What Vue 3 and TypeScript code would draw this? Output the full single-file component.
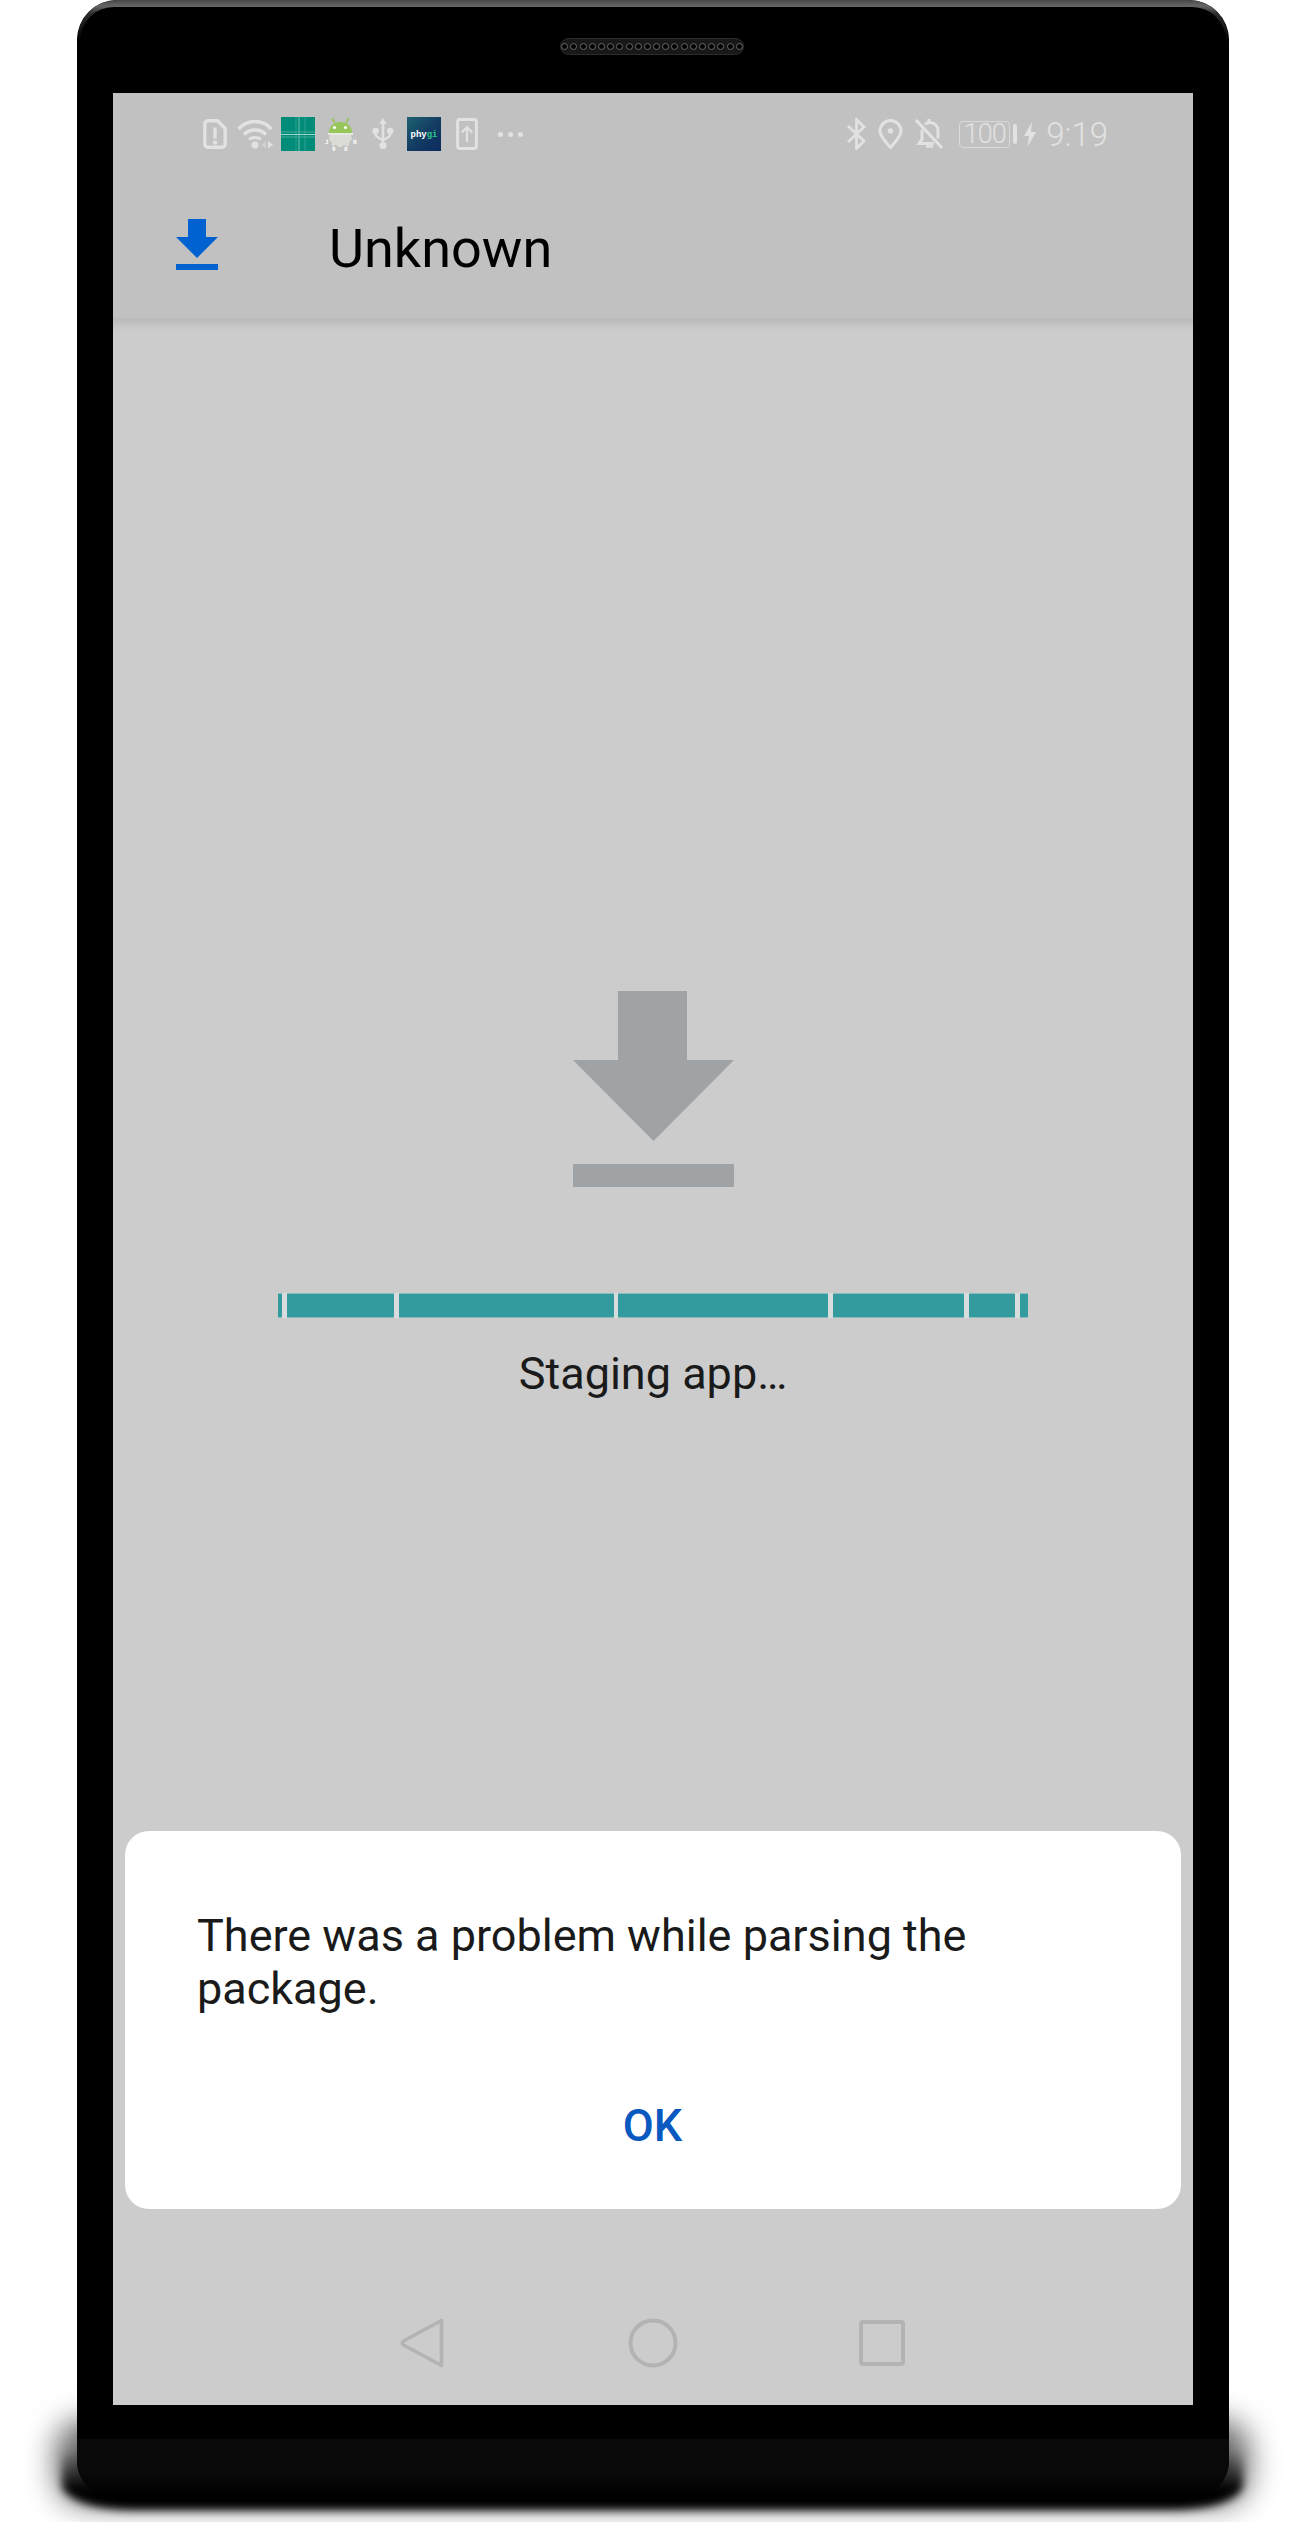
<script setup lang="ts">
const segments: number[] = [4, 107, 215, 210, 131, 46, 8]
const holes: number[] = Array.from({ length: 20 }, (_, i) => i)
</script>

<template>
  <div class="page">
    <div class="shadow-soft"></div>
    <div class="shadow-edge"></div>
    <div class="phone">
      <div class="bevel"></div>
      <div class="speaker">
        <span v-for="h in holes" :key="h" class="hole"></span>
      </div>
      <div class="screen">
        <header class="appbar">
          <div class="status">
            <div class="icons">
              <svg class="i-sim" width="24" height="30" viewBox="0 0 24 30">
                <path d="M5 1.8h9.5L22.2 9.5V25a3.2 3.2 0 0 1-3.2 3.2H5A3.2 3.2 0 0 1 1.8 25V5A3.2 3.2 0 0 1 5 1.8z" fill="none" stroke="#e2e2e2" stroke-width="3.4"/>
                <path d="M12 8.5v11" stroke="#e2e2e2" stroke-width="3.4"/>
                <circle cx="12" cy="23.5" r="2.2" fill="#e2e2e2"/>
              </svg>
              <svg class="i-wifi" width="36" height="30" viewBox="0 0 36 30">
                <path d="M1.500 10C10.500 0 25.500 0 34.500 10" fill="none" stroke="#e2e2e2" stroke-width="3.4"/>
                <path d="M7 15.500C13 9.500 23 9.500 29 15.500" fill="none" stroke="#e2e2e2" stroke-width="3.4"/>
                <path d="M12 20.500C15 17.800 21 17.800 24 20.500" fill="none" stroke="#e2e2e2" stroke-width="3"/>
                <circle cx="18" cy="26" r="3.500" fill="#e2e2e2"/>
                <path d="M29 22v7.500l-4.500-3.800z" fill="#d2d2d2"/>
                <path d="M31 22v7.500l5-3.800z" fill="#e2e2e2"/>
              </svg>
              <svg class="i-teal" width="34" height="34" viewBox="0 0 34 34">
                <rect width="34" height="34" fill="#008c78"/>
                <path d="M15 0v34M24 0v34" stroke="#2fa08e" stroke-width="1"/>
                <path d="M18 0v34" stroke="#6fbfb1" stroke-width="1"/>
                <path d="M0 15h34M0 20h34" stroke="#45ab9a" stroke-width="1"/>
                <path d="M0 17.500h34" stroke="#9ed5ca" stroke-width="1"/>
              </svg>
              <svg class="i-droid" width="32" height="33" viewBox="0 0 32 33">
                <path d="M7 0l3 5M24 0l-3 5" stroke="#97c65a" stroke-width="1.6"/>
                <path d="M4 15C4 8 9 4 15.500 4S27 8 27 15z" fill="#97c65a"/>
                <circle cx="9.500" cy="9.500" r="1.600" fill="#fff"/>
                <circle cx="20.500" cy="9.500" r="1.600" fill="#fff"/>
                <path d="M3 15h25v2H3z" fill="#e8e8e2"/>
                <path d="M5 17h21l1 4-3 4v3h-3v-1h-3l-1 2h-4l-1-2h-3v1H7v-3l-3-4z" fill="#dcdcd6"/>
                <text x="0" y="26" class="tiny">J</text>
                <text x="28" y="26" class="tiny">N</text>
                <text x="7" y="33" class="tiny">9</text>
                <text x="19" y="33" class="tiny">0</text>
              </svg>
              <svg class="i-usb" width="22" height="32" viewBox="0 0 22 32">
                <path d="M11 0l3.800 6H7.200z" fill="#e2e2e2"/>
                <path d="M11 5v22" stroke="#e2e2e2" stroke-width="2.600"/>
                <circle cx="11" cy="27.500" r="3.600" fill="#e2e2e2"/>
                <circle cx="3.600" cy="13" r="3.200" fill="#e2e2e2"/>
                <circle cx="18.200" cy="13" r="3.200" fill="#e2e2e2"/>
                <path d="M3.600 13v3.500c0 2.500 3 3 7.400 5.500M18.200 13v3.500c0 2.500-3 3-7.200 5.500" fill="none" stroke="#e2e2e2" stroke-width="2.400"/>
              </svg>
              <svg class="i-phygi" width="34" height="34" viewBox="0 0 34 34">
                <defs>
                  <linearGradient id="phy" x1="0" y1="0" x2="1" y2="1">
                    <stop offset="0" stop-color="#1f6270"/>
                    <stop offset="0.55" stop-color="#123a62"/>
                    <stop offset="1" stop-color="#0d2a60"/>
                  </linearGradient>
                </defs>
                <rect width="34" height="34" fill="url(#phy)"/>
                <text x="3.500" y="20" class="phy">phy<tspan fill="#2cc48b">gi</tspan></text>
              </svg>
              <svg class="i-up" width="22" height="32" viewBox="0 0 22 32">
                <rect x="1.600" y="1.600" width="18.800" height="28.800" rx="2.400" fill="none" stroke="#e2e2e2" stroke-width="3"/>
                <path d="M11 24V9.500M5.800 14.500L11 9l5.200 5.500" fill="none" stroke="#e2e2e2" stroke-width="2.200"/>
              </svg>
              <div class="dots"><span></span><span></span><span></span></div>
            </div>
            <div class="icons">
              <svg class="i-bt" width="19" height="32" viewBox="0 0 19 32">
                <path d="M1 8l16 15-7.500 7.500v-29L17 9 1 24" fill="none" stroke="#e2e2e2" stroke-width="2.800"/>
              </svg>
              <svg class="i-pin" width="25" height="31" viewBox="0 0 25 31">
                <path d="M12.500 28.500C8 23 2 17.500 2 12a10.500 10.500 0 0 1 21 0c0 5.500-6 11-10.500 16.500z" fill="none" stroke="#e2e2e2" stroke-width="3"/>
                <circle cx="12.500" cy="12" r="2.800" fill="#e2e2e2"/>
              </svg>
              <svg class="i-bell" width="28" height="31" viewBox="0 0 28 31">
                <path d="M7 10.500V20l-3 4.500h15M10 5.500C11.500 4 13 3.500 15 3.500c4.500 0 8 3.500 8 8v8" fill="none" stroke="#e2e2e2" stroke-width="3"/>
                <path d="M11 27.500h7" stroke="#e2e2e2" stroke-width="2.400"/>
                <path d="M1 1l26 28" stroke="#e2e2e2" stroke-width="3"/>
                <path d="M14 0v3" stroke="#e2e2e2" stroke-width="3"/>
              </svg>
              <div class="battery"><span>100</span></div>
              <span class="nub"></span>
              <svg class="i-bolt" width="12" height="25" viewBox="0 0 12 25">
                <path d="M8 0L0 14h5L3.500 25 12 10H7z" fill="#e2e2e2"/>
              </svg>
              <span class="time">9:19</span>
            </div>
          </div>
          <div class="toolbar">
            <svg class="tool-icon" width="42" height="51" viewBox="0 0 42 51">
              <path d="M12 0h18v18h12L21 39 0 18h12z" fill="#0062d1"/>
              <rect y="45" width="42" height="6" fill="#0062d1"/>
            </svg>
            <h1 class="title">Unknown</h1>
          </div>
        </header>
        <main class="main">
          <svg class="big-icon" width="161" height="196" viewBox="0 0 161 196">
            <path d="M45 0h69v69h47L80.500 150 0 69h45z" fill="#9fa3a6"/>
            <rect y="173" width="161" height="23" fill="#9fa3a6"/>
          </svg>
          <div class="bar">
            <span v-for="(s, i) in segments" :key="i" class="seg" :style="{ width: s + 'px' }"></span>
          </div>
          <p class="staging">Staging app…</p>
        </main>
        <nav class="nav">
          <svg width="50" height="52" viewBox="0 0 50 52">
            <path d="M43.500 3.500V48.500L5.500 28a2.500 2.500 0 0 1 0-4z" fill="none" stroke="#b3b3b3" stroke-width="3.600" stroke-linejoin="round"/>
          </svg>
          <svg width="50" height="52" viewBox="0 0 50 52">
            <circle cx="25" cy="26" r="22.500" fill="none" stroke="#b3b3b3" stroke-width="4"/>
          </svg>
          <svg width="50" height="52" viewBox="0 0 50 52">
            <rect x="3" y="5" width="42" height="42" rx="2" fill="none" stroke="#b3b3b3" stroke-width="4"/>
          </svg>
        </nav>
        <section class="dialog">
          <p class="message">There was a problem while parsing the package.</p>
          <button class="ok" type="button">OK</button>
        </section>
      </div>
      <div class="chin"></div>
    </div>
  </div>
</template>

<style scoped>
.page {
  position: relative;
  width: 1305px;
  height: 2522px;
  background: #fff;
  overflow: hidden;
  font-family: Roboto, "Liberation Sans", sans-serif;
}
.shadow-soft {
  position: absolute;
  left: 56px;
  right: 56px;
  top: 2420px;
  height: 85px;
  background: rgba(0, 0, 0, 0.6);
  border-radius: 30px;
  filter: blur(15px);
}
.shadow-edge {
  position: absolute;
  left: 62px;
  right: 62px;
  top: 2450px;
  height: 60px;
  background: linear-gradient(rgba(0, 0, 0, 0), #000 65%);
  border-radius: 0 0 70px 70px / 0 0 26px 26px;
  filter: blur(4px);
}
.phone {
  position: relative;
  margin-left: 77px;
  width: 1152px;
  height: 2497px;
  background: #000;
  border-radius: 40px 40px 36px 36px;
  padding: 93px 36px 0;
  box-sizing: border-box;
  overflow: hidden;
}
.bevel {
  position: absolute;
  inset: 0 0 auto 0;
  height: 60px;
  border-radius: 40px 40px 0 0;
  background: linear-gradient(#484848, #666 6px, #2c2c2c 14px, #000 42px);
}
.bevel::after {
  content: "";
  position: absolute;
  left: 3px;
  right: 3px;
  top: 7px;
  height: 53px;
  background: #000;
  border-radius: 34px 34px 0 0;
}
.speaker {
  position: absolute;
  z-index: 1;
  left: 483px;
  top: 38px;
  width: 184px;
  height: 17px;
  box-sizing: border-box;
  border: 1px solid #2c2c2c;
  border-radius: 9px;
  background: #181818;
  display: flex;
  align-items: center;
  justify-content: center;
  gap: 2.200px;
}
.hole {
  width: 7px;
  height: 7px;
  box-sizing: border-box;
  border-radius: 50%;
  background: #000;
  border: 1px solid #6a6a6a;
}
.screen {
  position: relative;
  z-index: 1;
  width: 1080px;
  height: 2312px;
  background: #cccccc;
  display: flex;
  flex-direction: column;
}
.appbar {
  height: 225px;
  background: #c1c1c1;
  flex: none;
}
.status {
  height: 82px;
  display: flex;
  align-items: center;
  justify-content: space-between;
  padding: 0 85px 0 90px;
}
.icons {
  display: flex;
  align-items: center;
}
.icons svg {
  display: block;
  flex: none;
}
.i-wifi { margin-left: 10px; }
.i-teal { margin-left: 8px; }
.i-droid { margin-left: 10px; }
.i-usb { margin-left: 15px; }
.i-phygi { margin-left: 13px; }
.i-up { margin-left: 15px; }
.i-pin { margin-left: 12px; }
.i-bell { margin-left: 12px; }
.i-bolt { margin-left: 7px; }
.tiny {
  font-family: "DejaVu Sans Mono", monospace;
  font-size: 6px;
  font-weight: 700;
  fill: #fff;
}
.phy {
  font-family: "Liberation Mono", monospace;
  font-size: 9px;
  font-weight: 700;
  fill: #fff;
}
.dots {
  display: flex;
  gap: 5px;
  margin-left: 20px;
}
.dots span {
  width: 5px;
  height: 5px;
  border-radius: 50%;
  background: #e2e2e2;
}
.battery {
  box-sizing: border-box;
  width: 51px;
  height: 27px;
  margin-left: 16px;
  border: 1.500px solid #dadada;
  border-radius: 4px;
  display: flex;
  align-items: center;
  justify-content: center;
  color: #e2e2e2;
  font-size: 27px;
  font-weight: 300;
  letter-spacing: -1px;
  line-height: 1;
}
.nub {
  width: 4px;
  height: 20px;
  margin-left: 3px;
  border-radius: 2px;
  background: #e2e2e2;
}
.time {
  margin-left: 10px;
  color: #e2e2e2;
  font-size: 33px;
  font-weight: 300;
  line-height: 1;
}
.toolbar {
  height: 143px;
  display: flex;
  align-items: flex-start;
  padding-left: 63px;
}
.tool-icon {
  margin-top: 44px;
  flex: none;
}
.title {
  margin: 43px 0 0 111px;
  color: #000;
  font-size: 54px;
  font-weight: 400;
  line-height: 62px;
}
.main {
  flex: 1;
  display: flex;
  flex-direction: column;
  align-items: center;
  padding-top: 673px;
  background: linear-gradient(#b9b9b9, #cccccc 12px);
}
.big-icon {
  display: block;
  flex: none;
}
.bar {
  margin-top: 106px;
  width: 750px;
  height: 25px;
  display: flex;
  justify-content: space-between;
  background: #d9dcdc;
}
.seg {
  box-sizing: border-box;
  height: 25px;
  background: #339a9e;
  border-top: 1px solid #86bcbe;
  border-bottom: 1px solid #86bcbe;
  flex: none;
}
.staging {
  margin: 31px 0 0;
  color: #1a1a1a;
  font-size: 45px;
  line-height: 50px;
}
.nav {
  height: 124px;
  flex: none;
  display: flex;
  align-items: center;
  justify-content: center;
  gap: 180px;
}
.dialog {
  position: absolute;
  left: 12px;
  right: 12px;
  top: 1738px;
  height: 378px;
  box-sizing: border-box;
  background: #fff;
  border-radius: 24px;
  padding: 78px 73px 0 72px;
}
.message {
  margin: 0;
  color: #1a1a1a;
  font-size: 45px;
  line-height: 53px;
}
.ok {
  display: block;
  margin: 86px auto 0;
  padding: 0;
  background: none;
  border: 0;
  color: #0a59c0;
  font-family: inherit;
  font-size: 45px;
  font-weight: 500;
  line-height: 50px;
}
.chin {
  position: absolute;
  left: 0;
  right: 0;
  top: 2439px;
  height: 58px;
  background: linear-gradient(#090909, #090909 60%, #000);
}
</style>
